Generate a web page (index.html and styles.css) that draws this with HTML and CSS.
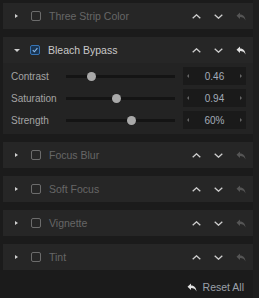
FILE: index.html
```html
<!DOCTYPE html>
<html>
<head>
<meta charset="utf-8">
<link rel="stylesheet" href="styles.css">
</head>
<body>
<div class="page">
  <div class="list">
    <div class="panel">
      <div class="head off">
        <span class="caret right"></span>
        <span class="check"></span>
        <span class="title">Three Strip Color</span>
        <span class="ctrls">
          <svg class="chev" viewBox="0 0 9 5"><path d="M0.7 4.3 L4.5 0.8 L8.3 4.3"/></svg>
          <svg class="chev" viewBox="0 0 9 5"><path d="M0.7 0.7 L4.5 4.2 L8.3 0.7"/></svg>
          <svg class="undo dim" viewBox="0 0 10 9"><path d="M4 0.5 L0.5 3.8 L4 7 V5 C6.5 5 8.3 5.8 9.5 8.5 C9.3 5 7.5 2.6 4 2.6 Z"/></svg>
        </span>
      </div>
    </div>

    <div class="panel">
      <div class="head">
        <span class="caret down"></span>
        <span class="check on"><svg viewBox="0 0 10 10"><path d="M2.2 5.2 L4.2 7.2 L8 2.6"/></svg></span>
        <span class="title">Bleach Bypass</span>
        <span class="ctrls">
          <svg class="chev" viewBox="0 0 9 5"><path d="M0.7 4.3 L4.5 0.8 L8.3 4.3"/></svg>
          <svg class="chev" viewBox="0 0 9 5"><path d="M0.7 0.7 L4.5 4.2 L8.3 0.7"/></svg>
          <svg class="undo" viewBox="0 0 10 9"><path d="M4 0.5 L0.5 3.8 L4 7 V5 C6.5 5 8.3 5.8 9.5 8.5 C9.3 5 7.5 2.6 4 2.6 Z"/></svg>
        </span>
      </div>
      <div class="body">
        <div class="row">
          <span class="label">Contrast</span>
          <span class="track"><span class="thumb" style="left:25px"></span></span>
          <span class="num"><span class="tri l"></span><span class="val">0.46</span><span class="tri r"></span></span>
        </div>
        <div class="row">
          <span class="label">Saturation</span>
          <span class="track"><span class="thumb" style="left:50px"></span></span>
          <span class="num"><span class="tri l"></span><span class="val">0.94</span><span class="tri r"></span></span>
        </div>
        <div class="row">
          <span class="label">Strength</span>
          <span class="track"><span class="thumb" style="left:65px"></span></span>
          <span class="num"><span class="tri l"></span><span class="val">60%</span><span class="tri r"></span></span>
        </div>
      </div>
    </div>

    <div class="panel">
      <div class="head off">
        <span class="caret right"></span>
        <span class="check"></span>
        <span class="title">Focus Blur</span>
        <span class="ctrls">
          <svg class="chev" viewBox="0 0 9 5"><path d="M0.7 4.3 L4.5 0.8 L8.3 4.3"/></svg>
          <svg class="chev" viewBox="0 0 9 5"><path d="M0.7 0.7 L4.5 4.2 L8.3 0.7"/></svg>
          <svg class="undo dim" viewBox="0 0 10 9"><path d="M4 0.5 L0.5 3.8 L4 7 V5 C6.5 5 8.3 5.8 9.5 8.5 C9.3 5 7.5 2.6 4 2.6 Z"/></svg>
        </span>
      </div>
    </div>

    <div class="panel">
      <div class="head off">
        <span class="caret right"></span>
        <span class="check"></span>
        <span class="title">Soft Focus</span>
        <span class="ctrls">
          <svg class="chev" viewBox="0 0 9 5"><path d="M0.7 4.3 L4.5 0.8 L8.3 4.3"/></svg>
          <svg class="chev" viewBox="0 0 9 5"><path d="M0.7 0.7 L4.5 4.2 L8.3 0.7"/></svg>
          <svg class="undo dim" viewBox="0 0 10 9"><path d="M4 0.5 L0.5 3.8 L4 7 V5 C6.5 5 8.3 5.8 9.5 8.5 C9.3 5 7.5 2.6 4 2.6 Z"/></svg>
        </span>
      </div>
    </div>

    <div class="panel">
      <div class="head off">
        <span class="caret right"></span>
        <span class="check"></span>
        <span class="title">Vignette</span>
        <span class="ctrls">
          <svg class="chev" viewBox="0 0 9 5"><path d="M0.7 4.3 L4.5 0.8 L8.3 4.3"/></svg>
          <svg class="chev" viewBox="0 0 9 5"><path d="M0.7 0.7 L4.5 4.2 L8.3 0.7"/></svg>
          <svg class="undo dim" viewBox="0 0 10 9"><path d="M4 0.5 L0.5 3.8 L4 7 V5 C6.5 5 8.3 5.8 9.5 8.5 C9.3 5 7.5 2.6 4 2.6 Z"/></svg>
        </span>
      </div>
    </div>

    <div class="panel">
      <div class="head off">
        <span class="caret right"></span>
        <span class="check"></span>
        <span class="title">Tint</span>
        <span class="ctrls">
          <svg class="chev" viewBox="0 0 9 5"><path d="M0.7 4.3 L4.5 0.8 L8.3 4.3"/></svg>
          <svg class="chev" viewBox="0 0 9 5"><path d="M0.7 0.7 L4.5 4.2 L8.3 0.7"/></svg>
          <svg class="undo dim" viewBox="0 0 10 9"><path d="M4 0.5 L0.5 3.8 L4 7 V5 C6.5 5 8.3 5.8 9.5 8.5 C9.3 5 7.5 2.6 4 2.6 Z"/></svg>
        </span>
      </div>
    </div>

    <div class="footer">
      <svg class="undo" viewBox="0 0 10 9"><path d="M4 0.5 L0.5 3.8 L4 7 V5 C6.5 5 8.3 5.8 9.5 8.5 C9.3 5 7.5 2.6 4 2.6 Z"/></svg>
      <span class="reset">Reset All</span>
    </div>
  </div>
  <div class="scroll"></div>
</div>
</body>
</html>
```

FILE: styles.css
```css
html, body {
  margin: 0;
  padding: 0;
  background: #1b1b1b;
}
body {
  width: 259px;
  height: 298px;
  overflow: hidden;
  font-family: "Liberation Sans", Arial, sans-serif;
  font-size: 10px;
}
.page {
  display: flex;
  height: 298px;
}
.list {
  width: 250px;
  padding: 3px 0 0 3px;
  display: flex;
  flex-direction: column;
  gap: 8px;
}
.scroll {
  width: 6px;
  margin-left: 0;
  background: #1e1e1e;
}
.panel {
  background: #262626;
}
.head {
  height: 26px;
  display: flex;
  align-items: center;
  padding-left: 11px;
}
.caret {
  width: 0;
  height: 0;
  display: inline-block;
}
.caret.right {
  border-top: 2.5px solid transparent;
  border-bottom: 2.5px solid transparent;
  border-left: 3px solid #d0d0d0;
  margin-right: 13px;
  margin-left: 1px;
}
.caret.down {
  border-left: 3px solid transparent;
  border-right: 3px solid transparent;
  border-top: 3px solid #d0d0d0;
  margin-right: 10px;
}
.check {
  width: 10px;
  height: 10px;
  border: 1px solid #6c6c6c;
  border-radius: 2px;
  box-sizing: border-box;
  display: inline-flex;
  margin-right: 8px;
}
.check.on {
  border-color: #3674b5;
  background: #1a3552;
}
.check svg {
  width: 8px;
  height: 8px;
  fill: none;
  stroke: #8db8e6;
  stroke-width: 1.4;
}
.title {
  color: #c9c9c9;
  font-size: 10.5px;
  flex: 1;
}
.off .title {
  color: #666;
}
.ctrls {
  display: flex;
  align-items: center;
  gap: 13px;
  padding-right: 7px;
}
.chev {
  width: 9px;
  height: 5px;
  fill: none;
  stroke: #cfcfcf;
  stroke-width: 1.3;
}
.undo {
  width: 10px;
  height: 9px;
  fill: #e2e2e2;
}
.undo.dim {
  fill: #555;
}
.body {
  background: #232323;
  padding: 4px 0 5px 0;
  display: flex;
  flex-direction: column;
  gap: 4px;
}
.row {
  height: 18px;
  display: flex;
  align-items: center;
  padding-left: 8px;
}
.label {
  width: 55px;
  color: #a4a4a4;
  font-size: 10px;
}
.track {
  position: relative;
  width: 109px;
  height: 3px;
  background: #141414;
  margin-right: 8px;
}
.thumb {
  position: absolute;
  top: -3px;
  width: 9px;
  height: 9px;
  margin-left: -4px;
  border-radius: 50%;
  background: #a9a9a9;
}
.num {
  width: 63px;
  height: 18px;
  background: #1a1a1a;
  display: flex;
  align-items: center;
  justify-content: space-between;
  padding: 0 4px;
  box-sizing: border-box;
}
.val {
  color: #a3abb8;
  font-size: 10px;
}
.tri {
  width: 0;
  height: 0;
  border-top: 2.5px solid transparent;
  border-bottom: 2.5px solid transparent;
}
.tri.l { border-right: 2px solid #666; }
.tri.r { border-left: 2px solid #666; }
.footer {
  display: flex;
  align-items: center;
  justify-content: flex-end;
  padding-right: 9px;
  margin-top: 3px;
  gap: 6px;
}
.reset {
  color: #9aa0aa;
  font-size: 10.5px;
}
```
